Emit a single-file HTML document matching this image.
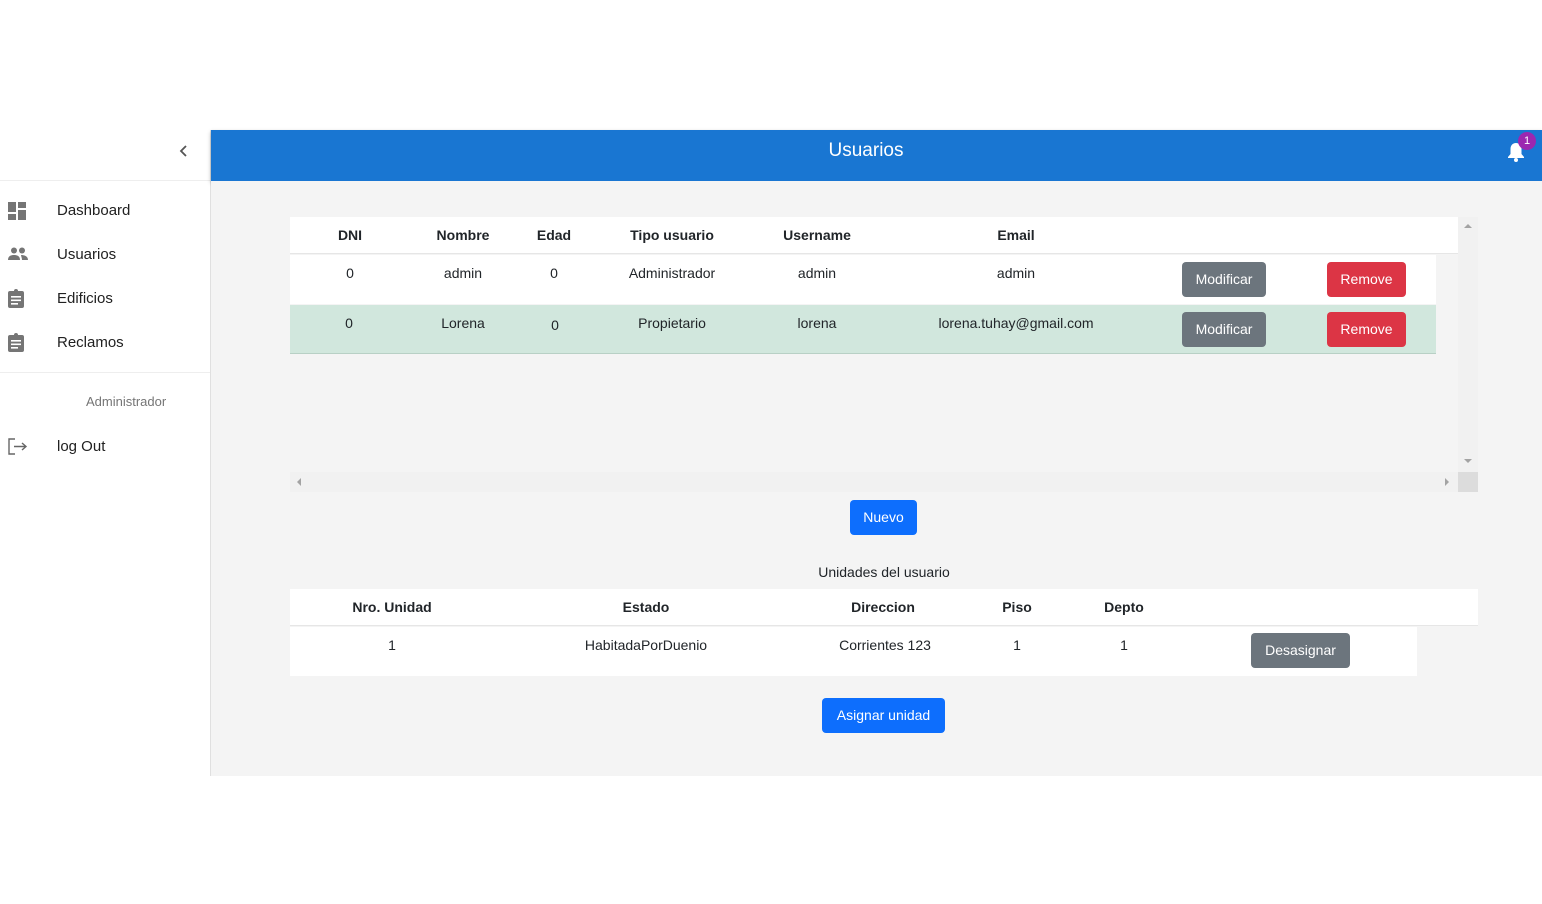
<!DOCTYPE html>
<html><head><style>
*{box-sizing:border-box;margin:0;padding:0}
body{width:1542px;height:904px;background:#fff;font-family:"Liberation Sans",Arial,sans-serif;position:relative;overflow:hidden;color:#212529}
.abs{position:absolute}
.sb{left:0;top:130px;width:211px;height:646px;background:#fff;border-right:1px solid #e0e0e0}
.nav{position:absolute;left:57px;font-size:15px;color:#212121}
.ic{position:absolute;left:8px;fill:#757575}
.hdr{left:211px;top:130px;width:1331px;height:51px;background:#1976d2;box-shadow:0 2px 4px rgba(0,0,0,.3);color:#fff;font-size:20px;line-height:42px}
.main{left:211px;top:181px;width:1331px;height:595px;background:#f4f4f4}
.t{position:absolute;font-size:14px;text-align:center;transform:translateX(-50%);white-space:nowrap}
.b{font-weight:bold}
.btn{position:absolute;color:#fff;font-size:14px;border-radius:4px;text-align:center;line-height:34px;height:35px}
.g{background:#6c757d}.r{background:#dc3545}.p{background:#0d6efd}
</style></head><body>
<div class="abs sb">
<svg class="abs" style="left:179px;top:15px" width="10" height="12" viewBox="0 0 10 12" fill="none" stroke="#555" stroke-width="1.8"><path d="M7 1L2 6l5 5"/></svg>
<div class="abs" style="left:0;top:50px;width:210px;border-top:1px solid #eee"></div>
<svg class="ic" style="top:72px" width="18" height="18" viewBox="0 0 18 18"><rect x="0" y="0" width="8" height="10"/><rect x="10" y="0" width="8" height="6"/><rect x="0" y="12" width="8" height="6"/><rect x="10" y="8" width="8" height="10"/></svg>
<div class="nav" style="top:72px">Dashboard</div>
<svg class="ic" style="top:117px" width="20" height="14" viewBox="0 0 20 14"><circle cx="6" cy="3.5" r="3"/><circle cx="14" cy="3.5" r="3"/><path d="M0 13c0-4 3-5 6-5s6 1 6 5z"/><path d="M13 8c3 0 7 1 7 5h-6c0-2-1-4-1-5z"/></svg>
<div class="nav" style="top:116px">Usuarios</div>
<svg class="ic" style="top:159px" width="16" height="19" viewBox="0 0 16 19"><path d="M2 2h4a2 2 0 0 1 4 0h4a2 2 0 0 1 2 2v13a2 2 0 0 1-2 2H2a2 2 0 0 1-2-2V4a2 2 0 0 1 2-2z"/><rect x="3" y="7" width="10" height="1.6" fill="#fff"/><rect x="3" y="10.5" width="10" height="1.6" fill="#fff"/><rect x="3" y="14" width="7" height="1.6" fill="#fff"/></svg>
<div class="nav" style="top:160px">Edificios</div>
<svg class="ic" style="top:203px" width="16" height="19" viewBox="0 0 16 19"><path d="M2 2h4a2 2 0 0 1 4 0h4a2 2 0 0 1 2 2v13a2 2 0 0 1-2 2H2a2 2 0 0 1-2-2V4a2 2 0 0 1 2-2z"/><rect x="3" y="7" width="10" height="1.6" fill="#fff"/><rect x="3" y="10.5" width="10" height="1.6" fill="#fff"/><rect x="3" y="14" width="7" height="1.6" fill="#fff"/></svg>
<div class="nav" style="top:204px">Reclamos</div>
<div class="abs" style="left:0;top:242px;width:210px;border-top:1px solid #eee"></div>
<div class="abs" style="left:86px;top:264px;font-size:13px;color:#757575">Administrador</div>
<svg class="abs" style="left:8px;top:308px" width="20" height="17" viewBox="0 0 20 17" fill="none" stroke="#666" stroke-width="1.4"><path d="M7 1H1v15h6"/><path d="M6 8.5h12M14 5l4 3.5-4 3.5"/></svg>
<div class="nav" style="top:308px">log Out</div>
</div>
<div class="abs hdr"><div class="t" style="left:655px;top:0;font-size:19px;line-height:42px">Usuarios</div>
<svg class="abs" style="left:1296px;top:12px" width="18" height="20" viewBox="0 0 18 20" fill="#fff"><path d="M9 1c-3.5 0-5.5 2.5-5.5 6v5L1 15v1h16v-1l-2.5-3V7C14.5 3.5 12.5 1 9 1z"/><circle cx="9" cy="18" r="2"/></svg>
<div class="abs" style="left:1307px;top:2px;width:18px;height:18px;border-radius:50%;background:#9c27b0;font-size:11px;line-height:18px;text-align:center">1</div>
</div>
<div class="abs main"></div>
<div class="abs" style="left:290px;top:217px;width:1168px;height:37px;background:#fff;border-bottom:1px solid #e6e6e6"></div>
<div class="abs" style="left:290px;top:255px;width:1146px;height:49px;background:#fff"></div>
<div class="abs" style="left:290px;top:305px;width:1146px;height:49px;background:#d1e7dd;border-bottom:1px solid #b8d0c5"></div>
<div class="abs" style="left:1458px;top:217px;width:20px;height:255px;background:#f1f1f1"></div>
<div class="abs" style="left:290px;top:472px;width:1168px;height:20px;background:#f1f1f1"></div>
<div class="abs" style="left:1458px;top:472px;width:20px;height:20px;background:#dcdcdc"></div>
<div class="abs" style="left:1464px;top:224px;border:4px solid transparent;border-bottom-color:#a3a3a3;border-top:0"></div>
<div class="abs" style="left:1464px;top:459px;border:4px solid transparent;border-top-color:#a3a3a3;border-bottom:0"></div>
<div class="abs" style="left:297px;top:478px;border:4px solid transparent;border-right-color:#a3a3a3;border-left:0"></div>
<div class="abs" style="left:1445px;top:478px;border:4px solid transparent;border-left-color:#a3a3a3;border-right:0"></div>
<div class="t b" style="left:350px;top:227px">DNI</div>
<div class="t b" style="left:463px;top:227px">Nombre</div>
<div class="t b" style="left:554px;top:227px">Edad</div>
<div class="t b" style="left:672px;top:227px">Tipo usuario</div>
<div class="t b" style="left:817px;top:227px">Username</div>
<div class="t b" style="left:1016px;top:227px">Email</div>
<div class="t" style="left:350px;top:265px">0</div>
<div class="t" style="left:463px;top:265px">admin</div>
<div class="t" style="left:554px;top:265px">0</div>
<div class="t" style="left:672px;top:265px">Administrador</div>
<div class="t" style="left:817px;top:265px">admin</div>
<div class="t" style="left:1016px;top:265px">admin</div>
<div class="t" style="left:349px;top:315px">0</div>
<div class="t" style="left:463px;top:315px">Lorena</div>
<div class="t" style="left:555px;top:317px">0</div>
<div class="t" style="left:672px;top:315px">Propietario</div>
<div class="t" style="left:817px;top:315px">lorena</div>
<div class="t" style="left:1016px;top:315px">lorena.tuhay@gmail.com</div>
<div class="btn g" style="left:1182px;top:262px;width:84px">Modificar</div>
<div class="btn r" style="left:1327px;top:262px;width:79px">Remove</div>
<div class="btn g" style="left:1182px;top:312px;width:84px">Modificar</div>
<div class="btn r" style="left:1327px;top:312px;width:79px">Remove</div>
<div class="btn p" style="left:850px;top:500px;width:67px">Nuevo</div>
<div class="t" style="left:884px;top:564px">Unidades del usuario</div>
<div class="abs" style="left:290px;top:589px;width:1188px;height:37px;background:#fff;border-bottom:1px solid #e6e6e6"></div>
<div class="abs" style="left:290px;top:627px;width:1127px;height:49px;background:#fff"></div>
<div class="t b" style="left:392px;top:599px">Nro. Unidad</div>
<div class="t b" style="left:646px;top:599px">Estado</div>
<div class="t b" style="left:883px;top:599px">Direccion</div>
<div class="t b" style="left:1017px;top:599px">Piso</div>
<div class="t b" style="left:1124px;top:599px">Depto</div>
<div class="t" style="left:392px;top:637px">1</div>
<div class="t" style="left:646px;top:637px">HabitadaPorDuenio</div>
<div class="t" style="left:885px;top:637px">Corrientes 123</div>
<div class="t" style="left:1017px;top:637px">1</div>
<div class="t" style="left:1124px;top:637px">1</div>
<div class="btn g" style="left:1251px;top:633px;width:99px">Desasignar</div>
<div class="btn p" style="left:822px;top:698px;width:123px">Asignar unidad</div>
</body></html>
